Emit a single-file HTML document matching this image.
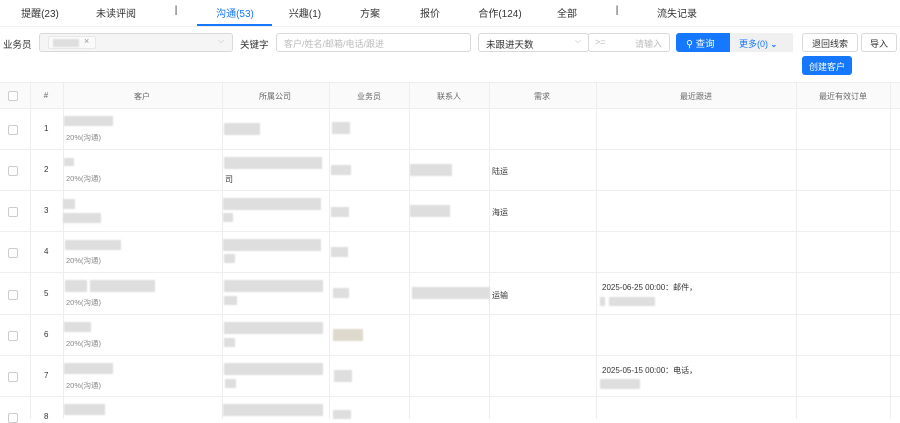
<!DOCTYPE html>
<html><head><meta charset="utf-8"><style>
*{box-sizing:border-box;margin:0;padding:0}
body{width:900px;height:419px;overflow:hidden;background:#fff;font-family:"Liberation Sans","Noto Sans CJK SC",sans-serif;color:#333;position:relative;font-size:9px}
.a{position:absolute}
.t{position:absolute;top:5px;font-size:10px;color:#333;transform:translateX(-50%);white-space:nowrap}
.box{position:absolute;border:1px solid #d9d9d9;border-radius:3px;background:#fff;height:19px;top:33px}
.ph{color:#bbb;font-size:9px}
.b{position:absolute;background:#dedede;filter:blur(0.7px)}
.vl{position:absolute;top:82px;bottom:0;width:1px;background:#eee}
.hl{position:absolute;left:0;right:0;height:1px;background:#eee}
.th{position:absolute;top:91px;font-size:8px;color:#666;transform:translateX(-50%)}
.cb{position:absolute;left:8px;width:10px;height:10px;border:1px solid #ccc;border-radius:2px;background:#fff}
.n{position:absolute;left:44px;font-size:8px;color:#333}
.p{position:absolute;left:66px;font-size:7.5px;color:#888}
.tx{position:absolute;font-size:8px;color:#333}
</style></head><body>
<div class="t" style="left:40px">提醒(23)</div>
<div class="t" style="left:116px">未读评阅</div>
<div class="t" style="left:176px">|</div>
<div class="t" style="left:235px;color:#1677ff">沟通(53)</div>
<div class="t" style="left:305px">兴趣(1)</div>
<div class="t" style="left:370px">方案</div>
<div class="t" style="left:430px">报价</div>
<div class="t" style="left:500px">合作(124)</div>
<div class="t" style="left:567px">全部</div>
<div class="t" style="left:617px">|</div>
<div class="t" style="left:677px">流失记录</div>
<div class="a" style="left:197px;top:24px;width:75px;height:2px;background:#1677ff"></div>
<div class="a" style="left:0;top:26px;width:900px;height:1px;background:#f0f0f0"></div>

<div class="a" style="left:3px;top:37px;font-size:9.5px">业务员</div>
<div class="box" style="left:39px;width:194px;background:#f5f5f5">
 <div class="a" style="left:8px;top:2px;width:48px;height:13px;background:#fafafa;border:1px solid #e8e8e8;border-radius:2px"></div>
 <div class="b" style="left:13px;top:5px;width:26px;height:8px"></div>
 <div class="a" style="left:44px;top:2px;color:#999;font-size:9px">×</div>
 <div class="a" style="left:178px;top:2px;color:#bbb;font-size:8px">⌵</div>
</div>
<div class="a" style="left:240px;top:37px;font-size:9.5px">关键字</div>
<div class="box" style="left:276px;width:195px"><span class="a ph" style="left:7px;top:3px">客户/姓名/邮箱/电话/跟进</span></div>
<div class="box" style="left:478px;width:111px"><span class="a" style="left:7px;top:3px;font-size:9.5px">未跟进天数</span><span class="a" style="left:96px;top:2px;color:#bbb;font-size:8px">⌵</span></div>
<div class="box" style="left:588px;width:82px"><span class="a ph" style="left:6px;top:3px">&gt;=</span><span class="a ph" style="left:46px;top:3px">请输入</span></div>
<div class="a" style="left:676px;top:33px;width:54px;height:19px;background:#1677ff;border-radius:3px 0 0 3px;color:#fff;font-size:9.5px;padding:3px 0 0 10px">&#9906; 查询</div>
<div class="a" style="left:730px;top:33px;width:63px;height:19px;background:#f0f0f0;color:#1677ff;font-size:9px;padding:4px 0 0 9px">更多(0) <b style="font-size:8px">⌄</b></div>
<div class="box" style="left:802px;width:56px;text-align:center;font-size:9px;padding-top:3px">退回线索</div>
<div class="box" style="left:861px;width:36px;text-align:center;font-size:9px;padding-top:3px">导入</div>
<div class="a" style="left:802px;top:56px;width:50px;height:19px;background:#1677ff;border-radius:3px;color:#fff;font-size:9px;text-align:center;padding-top:4px">创建客户</div>

<div class="a" style="left:0;top:82px;width:900px;height:26px;background:#fafafa"></div>
<div class="hl" style="top:82px"></div>
<div class="vl" style="left:30px"></div><div class="vl" style="left:63px"></div><div class="vl" style="left:222px"></div><div class="vl" style="left:329px"></div><div class="vl" style="left:409px"></div><div class="vl" style="left:489px"></div><div class="vl" style="left:596px"></div><div class="vl" style="left:796px"></div><div class="vl" style="left:890px"></div>
<div class="cb" style="top:91px"></div>
<div class="th" style="left:46px">#</div>
<div class="th" style="left:142px">客户</div>
<div class="th" style="left:275px">所属公司</div>
<div class="th" style="left:369px">业务员</div>
<div class="th" style="left:449px">联系人</div>
<div class="th" style="left:542px">需求</div>
<div class="th" style="left:696px">最近跟进</div>
<div class="th" style="left:843px">最近有效订单</div>

<div class="hl" style="top:108px"></div><div class="hl" style="top:149px"></div><div class="hl" style="top:190px"></div><div class="hl" style="top:231px"></div><div class="hl" style="top:272px"></div><div class="hl" style="top:314px"></div><div class="hl" style="top:355px"></div><div class="hl" style="top:396px"></div>

<div class="cb" style="top:125px"></div><div class="n" style="top:124px">1</div>
<div class="b" style="left:64px;top:116px;width:49px;height:10px"></div><div class="p" style="top:132px">20%(沟通)</div>
<div class="b" style="left:224px;top:123px;width:36px;height:12px"></div>
<div class="b" style="left:332px;top:122px;width:18px;height:12px"></div>

<div class="cb" style="top:166px"></div><div class="n" style="top:165px">2</div>
<div class="b" style="left:64px;top:158px;width:10px;height:8px"></div><div class="p" style="top:173px">20%(沟通)</div>
<div class="b" style="left:224px;top:157px;width:98px;height:12px"></div><div class="tx" style="left:225px;top:174px">司</div>
<div class="b" style="left:331px;top:165px;width:20px;height:10px"></div>
<div class="b" style="left:410px;top:164px;width:42px;height:12px"></div>
<div class="tx" style="left:492px;top:166px">陆运</div>

<div class="cb" style="top:207px"></div><div class="n" style="top:206px">3</div>
<div class="b" style="left:63px;top:199px;width:12px;height:10px"></div><div class="b" style="left:63px;top:213px;width:38px;height:10px"></div>
<div class="b" style="left:223px;top:198px;width:98px;height:12px"></div><div class="b" style="left:223px;top:213px;width:10px;height:9px"></div>
<div class="b" style="left:331px;top:207px;width:18px;height:10px"></div>
<div class="b" style="left:410px;top:205px;width:40px;height:12px"></div>
<div class="tx" style="left:492px;top:207px">海运</div>

<div class="cb" style="top:248px"></div><div class="n" style="top:247px">4</div>
<div class="b" style="left:65px;top:240px;width:56px;height:10px"></div><div class="p" style="top:255px">20%(沟通)</div>
<div class="b" style="left:223px;top:239px;width:98px;height:12px"></div><div class="b" style="left:224px;top:254px;width:11px;height:9px"></div>
<div class="b" style="left:331px;top:247px;width:17px;height:10px"></div>

<div class="cb" style="top:290px"></div><div class="n" style="top:289px">5</div>
<div class="b" style="left:65px;top:280px;width:22px;height:12px"></div><div class="b" style="left:90px;top:280px;width:65px;height:12px"></div><div class="p" style="top:297px">20%(沟通)</div>
<div class="b" style="left:224px;top:280px;width:99px;height:12px"></div><div class="b" style="left:224px;top:296px;width:13px;height:9px"></div>
<div class="b" style="left:333px;top:288px;width:16px;height:10px"></div>
<div class="b" style="left:412px;top:287px;width:78px;height:12px"></div>
<div class="tx" style="left:492px;top:290px">运输</div>
<div class="tx" style="left:602px;top:282px">2025-06-25 00:00：邮件，</div>
<div class="b" style="left:600px;top:297px;width:5px;height:9px"></div><div class="b" style="left:609px;top:297px;width:46px;height:9px"></div>

<div class="cb" style="top:331px"></div><div class="n" style="top:330px">6</div>
<div class="b" style="left:64px;top:322px;width:27px;height:10px"></div><div class="p" style="top:338px">20%(沟通)</div>
<div class="b" style="left:224px;top:322px;width:99px;height:12px"></div><div class="b" style="left:224px;top:338px;width:11px;height:9px"></div>
<div class="b" style="left:333px;top:329px;width:30px;height:12px;background:#ddd9cc"></div>

<div class="cb" style="top:372px"></div><div class="n" style="top:371px">7</div>
<div class="b" style="left:64px;top:363px;width:49px;height:11px"></div><div class="p" style="top:380px">20%(沟通)</div>
<div class="b" style="left:224px;top:363px;width:99px;height:12px"></div><div class="b" style="left:225px;top:379px;width:11px;height:9px"></div>
<div class="b" style="left:334px;top:370px;width:18px;height:12px"></div>
<div class="tx" style="left:602px;top:365px">2025-05-15 00:00：电话，</div>
<div class="b" style="left:600px;top:379px;width:40px;height:10px"></div>

<div class="cb" style="top:413px"></div><div class="n" style="top:412px">8</div>
<div class="b" style="left:64px;top:404px;width:41px;height:11px"></div>
<div class="b" style="left:223px;top:404px;width:100px;height:12px"></div>
<div class="b" style="left:333px;top:410px;width:18px;height:9px"></div>
</body></html>
